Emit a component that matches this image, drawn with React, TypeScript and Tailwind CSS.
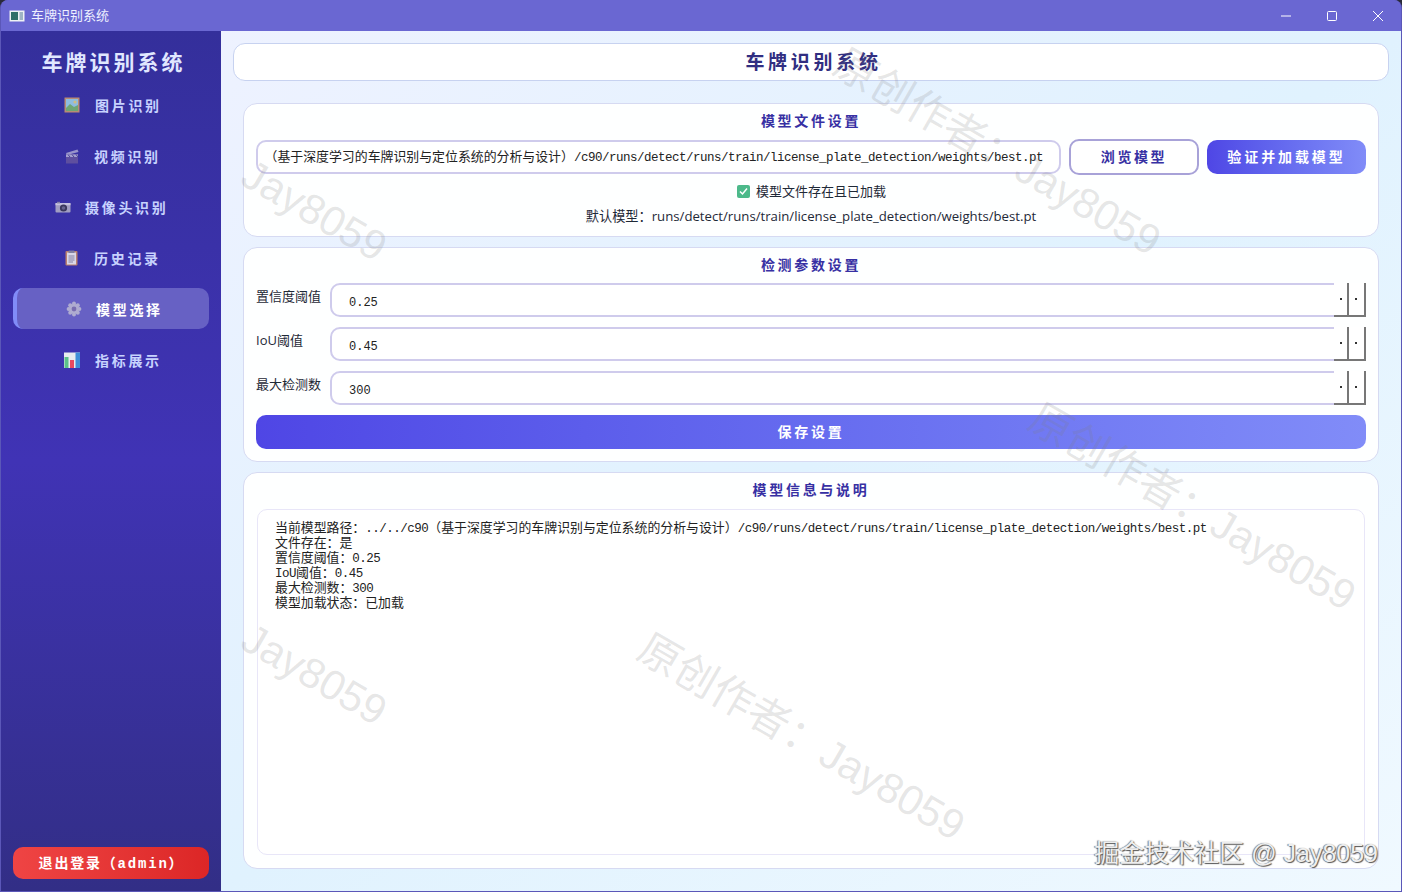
const sans = "font-['Open_Sans','Noto_Sans_CJK_SC',sans-serif]";
const mono = "font-['Liberation_Mono','Noto_Sans_CJK_SC',monospace]";

// latin runs are narrower than the cjk ones in the original
function MixedText({ text }: { text: string }) {
  return (
    <>
      {text.split(/([\x00-\x7f]+)/).map((part, i) =>
        i % 2 === 1 ? (
          <span key={i} className="text-[12.5px] tracking-[-0.5px]">{part}</span>
        ) : (
          <span key={i} className="text-[12.9px] [text-spacing-trim:space-all]">{part}</span>
        ),
      )}
    </>
  );
}

function PictureIcon() {
  return (
    <svg width="16" height="16" viewBox="0 0 16 16" className="opacity-80">
      <rect x="0.5" y="0.5" width="15" height="15" fill="#d9a36a" />
      <rect x="2" y="2" width="12" height="12" fill="#a5dff0" />
      <circle cx="11" cy="5" r="1.6" fill="#f5e27a" />
      <path d="M2 11 L6 7 L10 10 L14 8 V14 H2 Z" fill="#7cc46a" />
    </svg>
  );
}

function ClapperIcon() {
  return (
    <svg width="14" height="16" viewBox="0 0 14 16" className="opacity-75">
      <rect x="1" y="6" width="12" height="9.5" fill="#6b5a9e" />
      <path d="M1 5 L12.5 1.5 L13.5 4 L2 7 Z" fill="#b9b6d8" />
      <rect x="1" y="6.5" width="12" height="2.5" fill="#c9c6e0" />
      <path d="M3 6.5 L5 9 M7 6.5 L9 9 M11 6.5 L13 9" stroke="#4b4690" strokeWidth="1" />
    </svg>
  );
}

function CameraIcon() {
  return (
    <svg width="16" height="12" viewBox="0 0 16 12" className="opacity-85">
      <rect x="0.5" y="2" width="15" height="9.5" rx="1" fill="#b4b2c8" />
      <rect x="0.5" y="2" width="15" height="2.2" fill="#dedcea" />
      <rect x="2" y="0.8" width="3" height="1.6" fill="#8f8da8" />
      <circle cx="8.5" cy="7" r="3.6" fill="#3a3850" />
      <circle cx="8.5" cy="7" r="1.8" fill="#6f6d8a" />
    </svg>
  );
}

function ClipboardIcon() {
  return (
    <svg width="13" height="16" viewBox="0 0 13 16" className="opacity-90">
      <rect x="0.5" y="1" width="12" height="14.5" rx="1" fill="#c98a68" />
      <rect x="2" y="2.5" width="9" height="12" fill="#ece9ee" />
      <rect x="3.5" y="0.5" width="6" height="2.5" rx="0.5" fill="#8a8aa0" />
      <path d="M3.5 6 H9.5 M3.5 8 H9.5 M3.5 10 H9.5 M3.5 12 H8" stroke="#8b8aa6" strokeWidth="1" />
    </svg>
  );
}

function GearIcon() {
  return (
    <svg width="16" height="16" viewBox="0 0 16 16" className="opacity-90">
      <g fill="#b7b5d2">
        <circle cx="8" cy="2.6" r="2" />
        <circle cx="8" cy="13.4" r="2" />
        <circle cx="2.6" cy="8" r="2" />
        <circle cx="13.4" cy="8" r="2" />
        <circle cx="4.2" cy="4.2" r="2" />
        <circle cx="11.8" cy="4.2" r="2" />
        <circle cx="4.2" cy="11.8" r="2" />
        <circle cx="11.8" cy="11.8" r="2" />
        <circle cx="8" cy="8" r="5" />
      </g>
      <circle cx="8" cy="8" r="2.4" fill="#7c6fae" />
    </svg>
  );
}

function ChartIcon() {
  return (
    <svg width="16" height="16" viewBox="0 0 16 16">
      <rect x="0" y="0.5" width="16" height="15.5" fill="#e8ecef" />
      <rect x="0.5" y="5" width="4" height="11" fill="#5bc08a" />
      <rect x="6" y="8" width="4" height="8" fill="#e8495f" />
      <rect x="11.5" y="0.5" width="4.5" height="15.5" fill="#3f8fd8" />
    </svg>
  );
}

const navItems = [
  { label: '图片识别', icon: <PictureIcon />, gap: 'gap-[15px]', pl: 'pl-[51px]' },
  { label: '视频识别', icon: <ClapperIcon />, gap: 'gap-[15px]', pl: 'pl-[52px]' },
  { label: '摄像头识别', icon: <CameraIcon />, gap: 'gap-[14px]', pl: 'pl-[42px]' },
  { label: '历史记录', icon: <ClipboardIcon />, gap: 'gap-[16px]', pl: 'pl-[52px]' },
  { label: '模型选择', icon: <GearIcon />, gap: 'gap-[14px]', pl: 'pl-[53px]', active: true },
  { label: '指标展示', icon: <ChartIcon />, gap: 'gap-[15px]', pl: 'pl-[51px]' },
];

function Sidebar() {
  return (
    <aside className="w-[220px] shrink-0 flex flex-col items-center bg-gradient-to-b from-[#342f9b] via-[#4033b5] to-[#322e86] pb-[12px]">
      <h1 className="mt-[17px] pl-[5px] h-[28px] text-[21px] leading-[28px] font-bold tracking-[3px] text-[#e0e7ff]">车牌识别系统</h1>
      <nav className="mt-[8px] flex flex-col gap-[10px] w-[196px]">
        {navItems.map((item) => (
          <div
            key={item.label}
            className={`h-[41px] flex items-center ${item.gap} ${item.pl} rounded-[10px] text-[14px] font-bold tracking-[2.7px] ${
              item.active ? 'bg-[#6761c4] border-l-[4px] border-[#818cf8] text-white !pl-[49px]' : 'text-[#c7d2fe]'
            }`}
          >
            {item.icon}
            <span className="pt-[1px]">{item.label}</span>
          </div>
        ))}
      </nav>
      <button className={`mt-auto w-[196px] h-[32px] pt-[2px] pl-[1px] rounded-[10px] bg-gradient-to-r from-[#ef4444] to-[#dc2626] text-white text-[14px] font-bold tracking-[1.8px] ${mono}`}>
        退出登录（admin）
      </button>
    </aside>
  );
}

function SectionTitle({ children }: { children: string }) {
  return <h2 className="text-center text-[14px] leading-[20px] font-bold tracking-[2.7px] text-[#3730a3]">{children}</h2>;
}

function SpinField({ label, value }: { label: string; value: string }) {
  return (
    <div className="flex gap-[8px]">
      <label className="w-[66px] shrink-0 pt-[3px] text-[13px] leading-[20px] whitespace-nowrap text-[#1f2937]">{label}</label>
      <div className="flex-1 h-[34px] flex items-center rounded-[10px] border-2 border-[#cfcbec] bg-white">
        <span className={`flex-1 pl-[17px] pt-[6px] text-[12px] text-[#222] ${mono}`}>{value}</span>
        <div className="flex self-stretch -my-[2px] -mr-[2px] h-[34px]">
          <div className="w-[15px] flex items-center justify-center border-r-2 border-b-2 border-[#777] bg-white">
            <i className="block w-[2px] h-[2px] bg-[#333]" />
          </div>
          <div className="w-[17px] flex items-center justify-center pr-[1px] border-r-2 border-b-2 border-[#777] bg-white">
            <i className="block w-[2px] h-[2px] bg-[#333]" />
          </div>
        </div>
      </div>
    </div>
  );
}

const infoLines = [
  '当前模型路径：../../c90（基于深度学习的车牌识别与定位系统的分析与设计）/c90/runs/detect/runs/train/license_plate_detection/weights/best.pt',
  '文件存在：是',
  '置信度阈值：0.25',
  'IoU阈值：0.45',
  '最大检测数：300',
  '模型加载状态：已加载',
];

const watermarks = [
  { text: '原创作者：Jay8059', pos: 'left-[848px] top-[42px]' },
  { text: '原创作者：Jay8059', pos: 'left-[1043px] top-[397px]' },
  { text: '原创作者：Jay8059', pos: 'left-[652px] top-[627px]' },
  { text: 'Jay8059', pos: 'left-[256px] top-[153px]' },
  { text: 'Jay8059', pos: 'left-[256px] top-[617px]' },
];

export default function App() {
  return (
    <div className={`relative h-screen w-full overflow-hidden bg-[#2a2a3a] ${sans}`}>
      <div className="h-full flex flex-col rounded-t-[8px] overflow-hidden border-b border-x border-[#5b57b8] bg-[#6a67d2]">
        <header className="h-[31px] shrink-0 flex items-center pl-[8px] bg-[#6a67d2] text-white">
          <svg width="16" height="12" viewBox="0 0 16 12" className="mr-[6px]">
            <rect x="0.5" y="0.5" width="15" height="11" fill="#eef2f4" />
            <rect x="2" y="2" width="7" height="8" fill="#2f6f68" />
            <rect x="10.5" y="2" width="3.5" height="8" fill="#9fb4c4" />
          </svg>
          <span className="text-[13px] text-[#eef0ff]">车牌识别系统</span>
          <div className="ml-auto flex items-center">
            <div className="w-[46px] h-[31px] flex items-center justify-center">
              <svg width="10" height="10" viewBox="0 0 10 10"><path d="M0 5 H10" stroke="#fff" strokeWidth="1" /></svg>
            </div>
            <div className="w-[46px] h-[31px] flex items-center justify-center">
              <svg width="10" height="10" viewBox="0 0 10 10"><rect x="0.5" y="0.5" width="9" height="9" rx="1" fill="none" stroke="#fff" strokeWidth="1" /></svg>
            </div>
            <div className="w-[46px] h-[31px] flex items-center justify-center">
              <svg width="10" height="10" viewBox="0 0 10 10"><path d="M0 0 L10 10 M10 0 L0 10" stroke="#fff" strokeWidth="1" /></svg>
            </div>
          </div>
        </header>

        <div className="flex-1 min-h-0 flex">
          <Sidebar />
          <main className="flex-1 min-w-0 flex flex-col px-[12px] pt-[12px] pb-[22px] bg-gradient-to-br from-[#eef2ff] via-[#e0f2fe] to-[#f0f9ff]">
            <div className="h-[38px] shrink-0 pt-[1px] pl-[5px] flex items-center justify-center rounded-[12px] border border-[#c7d2f0] bg-white text-[19px] font-bold tracking-[3.7px] text-[#312e81]">
              车牌识别系统
            </div>
            <div className="mt-[22px] mx-[10px] flex-1 min-h-0 flex flex-col gap-[10px]">
              <section className="h-[134px] shrink-0 px-[12px] pt-[7px] rounded-[14px] border border-[#d6daf2] bg-white/95">
                <SectionTitle>模型文件设置</SectionTitle>
                <div className="mt-[8px] flex items-center gap-[8px]">
                  <div className={`w-[805px] h-[34px] flex items-center justify-end overflow-hidden whitespace-nowrap pr-[16px] rounded-[10px] border-2 border-[#cfcbec] bg-white text-[#222] ${mono}`}>
                    <span><MixedText text="（基于深度学习的车牌识别与定位系统的分析与设计）/c90/runs/detect/runs/train/license_plate_detection/weights/best.pt" /></span>
                  </div>
                  <button className="w-[130px] h-[36px] pb-[1px] rounded-[10px] border-2 border-[#a8a2d8] bg-white text-[14px] font-bold tracking-[2.6px] text-[#3730a3]">浏览模型</button>
                  <button className="flex-1 h-[34px] pb-[1px] rounded-[10px] bg-gradient-to-r from-[#4f46e5] to-[#818cf8] text-[14px] font-bold tracking-[2.9px] text-white">验证并加载模型</button>
                </div>
                <div className="mt-[6px] pl-[1px] flex items-center justify-center gap-[6px] text-[13px] leading-[20px] text-[#1f2937]">
                  <span className="w-[13px] h-[13px] rounded-[2px] bg-[#4cb98a] flex items-center justify-center">
                    <svg width="9" height="9" viewBox="0 0 9 9"><path d="M1 4.5 L3.5 7 L8 1.5" fill="none" stroke="#fff" strokeWidth="1.5" /></svg>
                  </span>
                  <span>模型文件存在且已加载</span>
                </div>
                <p className="mt-[5px] text-center text-[13.2px] leading-[20px] text-[#1f2937]">默认模型：runs/detect/runs/train/license_plate_detection/weights/best.pt</p>
              </section>

              <section className="h-[215px] shrink-0 px-[12px] pt-[7px] rounded-[14px] border border-[#d6daf2] bg-white/95">
                <SectionTitle>检测参数设置</SectionTitle>
                <div className="mt-[8px] flex flex-col gap-[10px]">
                  <SpinField label="置信度阈值" value="0.25" />
                  <SpinField label="IoU阈值" value="0.45" />
                  <SpinField label="最大检测数" value="300" />
                </div>
                <button className="mt-[10px] w-full h-[34px] pb-[1px] rounded-[10px] bg-gradient-to-r from-[#4f46e5] to-[#818cf8] text-[14px] font-bold tracking-[2.8px] text-white">保存设置</button>
              </section>

              <section className="flex-1 min-h-0 flex flex-col px-[13px] pt-[7px] pb-[13px] rounded-[14px] border border-[#d6daf2] bg-white/95">
                <SectionTitle>模型信息与说明</SectionTitle>
                <div className={`mt-[9px] flex-1 px-[17px] pt-[11px] rounded-[10px] border border-[#e8e6f8] bg-white leading-[15px] text-[#222] ${mono}`}>
                  {infoLines.map((line) => (
                    <div key={line} className="h-[15px] whitespace-nowrap"><MixedText text={line} /></div>
                  ))}
                </div>
              </section>
            </div>
          </main>
        </div>
      </div>

      {/* 水印 */}
      {watermarks.map((mark) => (
        <div
          key={mark.pos}
          className={`absolute ${mark.pos} origin-top-left rotate-[30deg] whitespace-nowrap text-[42px] leading-none text-[#808080]/20 pointer-events-none font-['Liberation_Sans','Noto_Sans_CJK_SC',sans-serif]`}
        >
          {mark.text}
        </div>
      ))}
      <div className="absolute right-[24px] bottom-[23px] whitespace-nowrap text-[25px] leading-[32px] text-[#eeeeee] [text-shadow:1px_1px_1px_#555,-1px_0_1px_#777] pointer-events-none font-['Liberation_Sans','Noto_Sans_CJK_SC',sans-serif]">
        掘金技术社区 @ Jay8059
      </div>
    </div>
  );
}
